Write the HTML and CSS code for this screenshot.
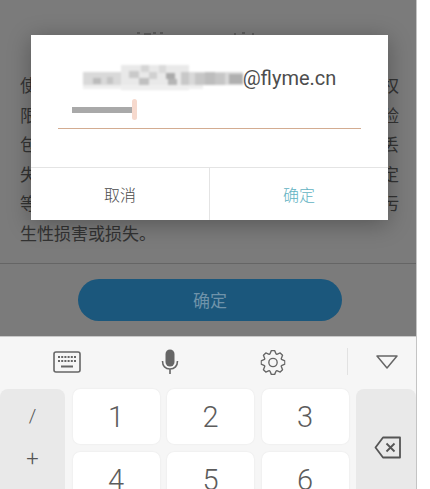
FILE: index.html
```html
<!DOCTYPE html>
<html lang="zh">
<head>
<meta charset="utf-8">
<title>确定</title>
<link rel="stylesheet" href="styles.css">
</head>
<body>
<div class="app">
  <main class="stage">
    <svg class="title-tips" width="160" height="3" viewBox="0 0 160 3" aria-hidden="true">
      <path d="M1 1h3M8 2h7M17 1h3M24 1h3M98 2h2M106 1h3M116 2h2" stroke="#555" stroke-width="1.500"/>
    </svg>
    <div class="lines">
      <div class="line"><span>使</span><span>权</span></div>
      <div class="line"><span>限</span><span>险</span></div>
      <div class="line"><span>包</span><span>丢</span></div>
      <div class="line"><span>失</span><span>定</span></div>
      <div class="line"><span>等</span><span>污</span></div>
      <div class="line"><span>生性损害或损失。</span></div>
    </div>
    <hr class="rule">
    <button class="primary">确定</button>

    <section class="dialog">
      <div class="dialog-body">
        <div class="email">
          <svg class="mosaic" width="160" height="25" viewBox="0 0 160 25" aria-hidden="true">
            <rect x="0" y="7" width="160" height="13" fill="#d9d9d9"/>
            <rect x="38" y="0" width="68" height="25" fill="#e9e9e9"/>
            <rect x="0" y="20" width="120" height="4" fill="#efefef"/>
            <rect x="10" y="13" width="8" height="6" fill="#bbb"/>
            <rect x="24" y="12" width="6" height="7" fill="#c4c4c4"/>
            <rect x="46" y="6" width="10" height="7" fill="#c9c9c9"/>
            <rect x="58" y="0" width="8" height="7" fill="#d5d5d5"/>
            <rect x="56" y="13" width="10" height="7" fill="#c0c0c0"/>
            <rect x="66" y="7" width="8" height="7" fill="#d0d0d0"/>
            <rect x="76" y="0" width="7" height="8" fill="#dadada"/>
            <rect x="83" y="8" width="9" height="6" fill="#aaa"/>
            <rect x="85" y="14" width="9" height="6" fill="#b5b5b5"/>
            <rect x="98" y="7" width="8" height="13" fill="#c8c8c8"/>
            <rect x="112" y="8" width="30" height="12" fill="#c6c6c6"/>
            <rect x="122" y="7" width="10" height="13" fill="#bdbdbd"/>
            <rect x="146" y="9" width="14" height="10" fill="#b0b0b0"/>
          </svg>
          <span>@flyme.cn</span>
        </div>
        <div class="field">
          <span class="masked"></span>
          <span class="cursor"></span>
        </div>
      </div>
      <div class="dialog-actions">
        <button class="action">取消</button>
        <button class="action action-ok">确定</button>
      </div>
    </section>
  </main>

  <section class="keyboard">
    <div class="toolbar">
      <span class="tool tool-kbd">
        <svg width="28" height="22" viewBox="0 0 28 22" fill="none" stroke="#666" stroke-width="1.6">
          <rect x="1" y="1" width="26" height="20" rx="2"/>
          <path d="M5 6h18M5 10h18" stroke-width="2" stroke-dasharray="2 1.2"/>
          <path d="M8 15.5h12" stroke-width="2"/>
        </svg>
      </span>
      <span class="tool tool-mic">
        <svg width="18" height="26" viewBox="0 0 18 26" fill="none" stroke="#666" stroke-width="1.6">
          <rect x="4.5" y="0.5" width="9" height="17" rx="4.5" fill="#666" stroke="none"/>
          <path d="M1.5 12c0 5 3 8 7.5 8s7.500-3 7.500-8M9 20v5"/>
        </svg>
      </span>
      <span class="tool tool-gear">
        <svg width="25" height="25" viewBox="0 0 24 24" fill="none" stroke="#666" stroke-width="1.300" stroke-linejoin="round">
          <polygon points="9.02,3.82 10.4,.61 13.6,.61 14.98,3.82 15.68,4.12 18.92,2.82 21.18,5.08 19.88,8.32 20.18,9.02 23.39,10.4 23.39,13.6 20.18,14.98 19.88,15.68 21.18,18.92 18.92,21.18 15.68,19.88 14.98,20.18 13.6,23.39 10.4,23.39 9.02,20.18 8.32,19.88 5.08,21.18 2.82,18.92 4.12,15.68 3.82,14.98 .61,13.6 .61,10.4 3.82,9.02 4.12,8.32 2.82,5.08 5.08,2.82 8.32,4.12"/>
          <circle cx="12" cy="12" r="4"/>
        </svg>
      </span>
      <span class="tool-divider"></span>
      <span class="tool tool-hide">
        <svg width="22" height="14" viewBox="0 0 22 14" fill="none" stroke="#666" stroke-width="1.500" stroke-linejoin="round">
          <path d="M1 1h20L11 13z"/>
        </svg>
      </span>
    </div>
    <div class="keys">
      <div class="key-side key-symbols"><span class="sym-slash">/</span><span class="sym-plus">+</span></div>
      <div class="key">1</div>
      <div class="key">2</div>
      <div class="key">3</div>
      <div class="key-side key-delete">
        <svg width="28" height="23" viewBox="0 0 28 23" fill="none" stroke="#555" stroke-width="1.800" stroke-linejoin="round">
          <path d="M9 1.500h17v20H9L1.500 11.500z"/>
          <path d="M12.500 7.500l8 8M20.500 7.500l-8 8"/>
        </svg>
      </div>
      <div class="key">4</div>
      <div class="key">5</div>
      <div class="key">6</div>
    </div>
  </section>
</div>
</body>
</html>
```
FILE: styles.css
```css
* { box-sizing: border-box; }
html, body { margin: 0; height: 489px; overflow: hidden; background: #fff; }
body { font-family: "Noto Sans CJK SC", "Liberation Sans", sans-serif; }
button { font: inherit; border: 0; padding: 0; background: none; }

.app {
  width: 417px;
  height: 489px;
  display: flex;
  flex-direction: column;
  border-right: 1px solid #c4c4c4;
}

.stage {
  position: relative;
  height: 337px;
  flex: none;
  padding-top: 70px;
  background: #7b7b7b;
  border-bottom: 1px solid #c9c9c9;
}
.title-tips { position: absolute; left: 136px; top: 32px; filter: blur(.4px); }
.lines { padding: 0 17px 0 20px; color: #333; font-size: 17px; line-height: 29.600px; }
.line { display: flex; justify-content: space-between; height: 29.600px; }
.rule { margin: 15px 0 0; border: 0; border-top: 1px solid #656565; }
.primary {
  display: block;
  width: 264px;
  height: 42px;
  margin: 15px 0 0 78px;
  border-radius: 21px;
  background: #1b577c;
  color: #6f93aa;
  font-size: 17px;
}

.dialog {
  position: absolute;
  left: 31px;
  top: 35px;
  width: 357px;
  height: 185px;
  background: #fff;
  box-shadow: 0 4px 22px rgba(0, 0, 0, .3);
  display: flex;
  flex-direction: column;
}
.dialog-body { flex: 1; padding-top: 30px; }
.email {
  display: flex;
  justify-content: center;
  align-items: center;
  height: 25px;
  color: #4d4d4d;
  font-family: Roboto, sans-serif;
  font-size: 20px;
}
.mosaic { display: block; flex: none; filter: blur(.8px); }
.field {
  position: relative;
  height: 30px;
  margin: 9px 27px 0;
  border-bottom: 1px solid #d3ac91;
}
.masked { position: absolute; left: 14px; top: 8px; width: 60px; height: 6px; background: #a9a9a9; filter: blur(.5px); }
.cursor { position: absolute; left: 74px; top: 0; width: 5px; height: 21px; border-radius: 3px; background: #f6d9cd; filter: blur(.6px); }
.dialog-actions { display: flex; height: 53px; border-top: 1px solid #e4e4e4; }
.action { flex: 1; color: #4a4a4a; font-size: 16px; font-weight: 300; }
.action-ok { border-left: 1px solid #e4e4e4; color: #62b2c2; }

.keyboard { flex: 1; min-height: 0; overflow: hidden; background: #f6f6f6; }
.toolbar { position: relative; height: 52px; }
.tool { position: absolute; top: 0; height: 50px; display: flex; align-items: center; justify-content: center; transform: translateX(-50%); }
.tool-kbd { left: 67px; }
.tool-mic { left: 170px; }
.tool-gear { left: 273px; }
.tool-hide { left: 387px; }
.tool-divider { position: absolute; left: 347px; top: 11px; height: 27px; border-left: 1px solid #e2e2e2; }

.keys {
  display: grid;
  grid-template-columns: 65px 87px 87px 87px 60px;
  grid-auto-rows: 55px;
  column-gap: 7.500px;
  row-gap: 8px;
}
.key {
  display: flex;
  align-items: center;
  justify-content: center;
  background: #fff;
  border-radius: 7px;
  box-shadow: 0 0 2px rgba(0, 0, 0, .08);
  color: #5c5c5c;
  font-family: Roboto, sans-serif;
  font-size: 29px;
  font-weight: 300;
}
.key-side { grid-row: span 2; background: #e9e9e9; border-radius: 8px 8px 0 0; }
.key-symbols { grid-column: 1; display: flex; flex-direction: column; align-items: center; color: #555; font-family: Roboto, sans-serif; font-size: 19px; font-weight: 300; line-height: 24px; padding-top: 15px; }
.sym-plus { margin-top: 19px; font-size: 22px; }
.key-delete { grid-column: 5; grid-row: 1 / span 2; display: flex; align-items: center; justify-content: center; padding-left: 3px; padding-bottom: 2px; height: 118px; }
```
